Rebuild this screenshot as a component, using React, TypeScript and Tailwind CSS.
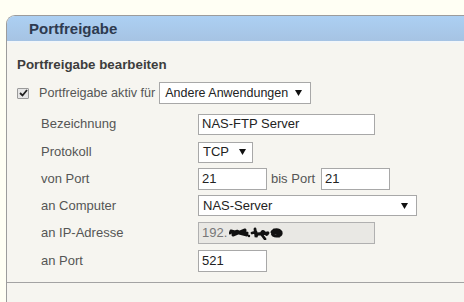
import React from "react";

const font = { fontFamily: '"Liberation Sans", Arial, sans-serif' };

function Arrow() {
  return (
    <svg width="7" height="6" viewBox="0 0 7 6" className="shrink-0">
      <path d="M0 0 L7 0 L3.5 6 Z" fill="#111" />
    </svg>
  );
}

function Label({ children }: { children: React.ReactNode }) {
  return <div className="w-[157px] shrink-0 text-[13px] text-[#555]">{children}</div>;
}

function Row({ h, children }: { h: string; children: React.ReactNode }) {
  return <div className={`flex items-center ${h}`}>{children}</div>;
}

export default function App() {
  return (
    <div
      className="w-[464px] h-[302px] overflow-hidden bg-[#fffff4] flex flex-col pt-[15px] pl-[6px]"
      style={font}
    >
      <div className="flex-1 flex flex-col bg-[#f6f5f0] border-l border-t border-[#9c9c9c] rounded-tl-[9px] overflow-hidden">
        <div className="h-[25px] shrink-0 flex items-center pl-[22px] bg-gradient-to-b from-[#acd0f3] to-[#a6c3e3]">
          <span className="text-[15px] font-bold text-[#2e3a4f] leading-none">Portfreigabe</span>
        </div>
        <div className="h-[2px] bg-[#f2f6f9]" />
        <div className="pl-[10px] pt-[15px] h-[32px] text-[13.33px] font-bold text-[#3d3d3d] leading-none">
          Portfreigabe bearbeiten
        </div>
        <div className="flex items-center h-[22px] pl-[10px] mt-[7px]">
          <div className="w-[12px] h-[11px] border border-[#9a9a9a] bg-[#e6e6e6] rounded-[1px] flex items-center justify-center">
            <svg width="9" height="8" viewBox="0 0 9 8">
              <path d="M1 4 L3.5 6.5 L8 1" stroke="#222" strokeWidth="1.8" fill="none" />
            </svg>
          </div>
          <span className="ml-[10px] text-[12.6px] text-[#555]">Portfreigabe aktiv für</span>
          <div className="ml-[4px] w-[152px] h-[22px] border border-[#a8a8a8] bg-white flex items-center justify-between pl-[5px] pr-[8px] text-[12.5px] text-[#222]">
            <span>Andere Anwendungen</span>
            <Arrow />
          </div>
        </div>
        <div className="flex flex-col pl-[34px] mt-[6px]">
          <Row h="h-[28px]">
            <Label>Bezeichnung</Label>
            <div className="w-[177px] h-[21px] border border-[#a8a8a8] bg-white pl-[3px] flex items-center text-[13px] text-[#222]">
              NAS-FTP Server
            </div>
          </Row>
          <Row h="h-[28px]">
            <Label>Protokoll</Label>
            <div className="w-[55px] h-[21px] border border-[#a8a8a8] bg-white pl-[4px] pr-[6px] flex items-center justify-between text-[13px] text-[#222]">
              <span>TCP</span>
              <Arrow />
            </div>
          </Row>
          <Row h="h-[26px]">
            <Label>von Port</Label>
            <div className="w-[69px] h-[22px] border border-[#a8a8a8] bg-white pl-[3px] flex items-center text-[13px] text-[#222]">
              21
            </div>
            <span className="ml-[4px] text-[13px] text-[#555]">bis Port</span>
            <div className="ml-[6px] w-[69px] h-[22px] border border-[#a8a8a8] bg-white pl-[3px] flex items-center text-[13px] text-[#222]">
              21
            </div>
          </Row>
          <Row h="h-[27px]">
            <Label>an Computer</Label>
            <div className="w-[219px] h-[21px] border border-[#a8a8a8] bg-white pl-[4px] pr-[8px] flex items-center justify-between text-[13px] text-[#222]">
              <span>NAS-Server</span>
              <Arrow />
            </div>
          </Row>
          <Row h="h-[28px]">
            <Label>an IP-Adresse</Label>
            <div className="w-[177px] h-[22px] border border-[#b0b0b0] bg-[#e9e8e4] pl-[3px] flex items-center text-[13px] text-[#777]">
              <span>192.</span>
              <svg width="60" height="14" viewBox="0 0 60 14" className="ml-[2px]">
                <path d="M1 7 C3 4 5 9 7 6 C9 3 11 10 13 6 C15 3 17 9 18 7 M2 5 L18 9 M4 9 L16 4" stroke="#111" strokeWidth="3" fill="none" strokeLinecap="round" />
                <circle cx="20" cy="10" r="1.2" fill="#111" />
                <path d="M23 7 L27 6 M26 3 L27 11 C29 5 31 11 33 6 C35 3 37 12 39 7 M33 9 L36 13 M28 8 L39 7" stroke="#111" strokeWidth="2.8" fill="none" strokeLinecap="round" />
                <path d="M43 6 C45 3 50 3 52 6 C53 10 47 11 44 9 C42 7 46 5 51 8 M45 4 L50 10" stroke="#111" strokeWidth="3" fill="none" strokeLinecap="round" />
              </svg>
            </div>
          </Row>
          <Row h="h-[28px]">
            <Label>an Port</Label>
            <div className="w-[69px] h-[22px] border border-[#a8a8a8] bg-white pl-[3px] flex items-center text-[13px] text-[#222]">
              521
            </div>
          </Row>
        </div>
        <div className="mt-[7px] h-[1px] bg-[#a3a3a3]" />
      </div>
    </div>
  );
}
